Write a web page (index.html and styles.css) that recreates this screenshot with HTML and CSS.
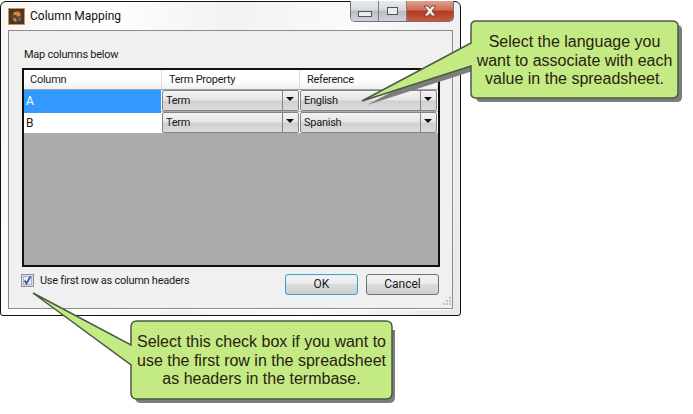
FILE: index.html
```html
<!DOCTYPE html>
<html lang="en">
<head>
    <meta charset="UTF-8" />
    <meta name="viewport" content="width=device-width, initial-scale=1" />
    <title>Column Mapping</title>
    <link rel="stylesheet" href="styles.css">
</head>
<body>
<div class="page">
    <div class="window">
        <div class="titlebar">
            <svg class="app-icon" width="17" height="17" viewBox="0 0 17 17">
                <rect x="0.5" y="0.5" width="16" height="16" fill="#3a3a38" stroke="#f08a24"/>
                <circle cx="8.5" cy="8.5" r="5.5" fill="#5b4a3a"/>
                <path d="M6 4 L11 3.5 L13 7 L10 9 L8 7 L5.5 7 Z M5 10 L8 10.5 L8.5 14 L6 13 Z M11 11 L13 10 L12 13 Z" fill="#e8812a"/>
            </svg>
            <span class="title-text">Column Mapping</span>
            <div class="controls">
                <div class="ctl ctl-min"><span class="glyph-min"></span></div>
                <div class="ctl ctl-max"><span class="glyph-max"></span></div>
                <div class="ctl ctl-close">
                    <svg width="16" height="12" viewBox="0 0 16 12">
                        <path d="M2 1 H6 L8 3.5 L10 1 H14 L10 6 L14 11 H10 L8 8.5 L6 11 H2 L6 6 Z" fill="#f4efe8" stroke="#6e4a40" stroke-width="1"/>
                    </svg>
                </div>
            </div>
        </div>

        <div class="client">
            <div class="map-label">Map columns below</div>

            <div class="grid">
                <div class="grid-row grid-head">
                    <div class="head-cell">Column</div>
                    <div class="head-cell">Term Property</div>
                    <div class="head-cell">Reference</div>
                </div>
                <div class="grid-row grid-data">
                    <div class="name-cell selected">A</div>
                    <div class="combo"><span class="combo-text">Term</span><span class="combo-btn"></span></div>
                    <div class="combo"><span class="combo-text">English</span><span class="combo-btn"></span></div>
                </div>
                <div class="grid-row grid-data">
                    <div class="name-cell">B</div>
                    <div class="combo"><span class="combo-text">Term</span><span class="combo-btn"></span></div>
                    <div class="combo"><span class="combo-text">Spanish</span><span class="combo-btn"></span></div>
                </div>
            </div>

            <div class="footer">
                <div class="check">
                    <svg width="13" height="13" viewBox="0 0 13 13">
                        <rect x="0.5" y="0.5" width="12" height="12" fill="#d5dcea" stroke="#8e8f8f"/>
                        <rect x="2.5" y="2.5" width="8" height="8" fill="#e4e9f3" stroke="#aab4c8"/>
                        <path d="M3.5 6.5 L5.5 9.5 L9.5 2.5" fill="none" stroke="#3d4f9c" stroke-width="1.7"/>
                    </svg>
                    <span>Use first row as column headers</span>
                </div>
                <div class="buttons">
                    <div class="btn btn-default">OK</div>
                    <div class="btn">Cancel</div>
                </div>
            </div>

            <svg class="grip" width="10" height="10" viewBox="0 0 10 10">
                <path d="M8 0h2v2H8z M5 3h2v2H5z M8 3h2v2H8z M2 6h2v2H2z M5 6h2v2H5z M8 6h2v2H8z" fill="#c4c4c4"/>
            </svg>
        </div>
    </div>

    <svg class="callouts" width="693" height="414" viewBox="0 0 693 414">
        <path d="M367 105 L476 47 V30 Q476 25 481 25 H677 Q682 25 682 30 V97 Q682 102 677 102 H481 Q476 102 476 97 V70 Z" fill="#7d7d7d"/>
        <path d="M362 101 L471 43 V26 Q471 21 476 21 H672 Q678 21 678 26 V93 Q678 98 672 98 H476 Q471 98 471 93 V66 Z" fill="#c3ea83" stroke="#4b5a45" stroke-width="1.5"/>
        <path d="M135 330 H395 V397 Q395 403 389 403 H141 Q135 403 135 397 Z" fill="#7d7d7d"/>
        <path d="M33 293 L131 345 V327 Q131 321 137 321 H386 Q392 321 392 327 V393 Q392 399 386 399 H137 Q131 399 131 393 V365 Z" fill="#c3ea83" stroke="#4b5a45" stroke-width="1.5"/>
    </svg>
    <div class="note note-lang">Select the language you<br>want to associate with each<br>value in the spreadsheet.</div>
    <div class="note note-check">Select this check box if you want to<br>use the first row in the spreadsheet<br>as headers in the termbase.</div>
</div>
</body>
</html>
```

FILE: styles.css
```css
html, body {
    margin: 0;
    padding: 0;
    background: #fff;
}
.page {
    position: relative;
    width: 693px;
    height: 414px;
    overflow: hidden;
    padding-top: 1px;
    box-sizing: border-box;
    font-family: Roboto, sans-serif;
    font-size: 11px;
    letter-spacing: -0.26px;
    color: #1a1a1a;
}
.window {
    width: 461px;
    height: 315px;
    box-sizing: border-box;
    border: 1px solid #111;
    border-radius: 6px 6px 3px 3px;
    background: linear-gradient(100deg, #f7f7f7, #fff 20%, #f2f2f2 45%, #fbfbfb 70%, #e9e9e9);
    padding: 0 7px;
    display: flex;
    flex-direction: column;
}
.titlebar {
    height: 28px;
    flex: none;
    display: flex;
    align-items: flex-start;
}
.app-icon {
    margin-top: 6px;
    flex: none;
}
.title-text {
    margin: 7px 0 0 5px;
    font-size: 12px;
    letter-spacing: 0;
    color: #111;
}
.controls {
    margin-left: auto;
    margin-right: -1px;
    margin-top: -1px;
    display: flex;
    height: 20px;
    border: 1px solid #6d7278;
    border-top: none;
    border-radius: 0 0 5px 5px;
    overflow: hidden;
}
.ctl {
    display: flex;
    align-items: center;
    justify-content: center;
    background: linear-gradient(#e8eaec, #d8dade 45%, #b9bcc2 50%, #cfd2d6);
}
.ctl-min {
    width: 27px;
    border-right: 1px solid #7b7f85;
}
.ctl-max {
    width: 27px;
    border-right: 1px solid #7b7f85;
}
.ctl-close {
    width: 46px;
    background: linear-gradient(#e0a292, #cf6b52 45%, #b23a22 52%, #c9593f);
}
.glyph-min {
    width: 12px;
    height: 4px;
    margin-top: 5px;
    background: #e9ebee;
    border: 1px solid #50565e;
}
.glyph-max {
    width: 9px;
    height: 6px;
    background: #e9ebee;
    border: 1.5px solid #50565e;
}
.client {
    position: relative;
    flex: 1;
    box-sizing: border-box;
    margin-bottom: 6px;
    background: #f0f0f0;
    border: 1px solid #8c8c8c;
    box-shadow: 0 1px 0 #fff;
    padding: 16px 12px 0 12px;
    display: flex;
    flex-direction: column;
}
.map-label {
    height: 16px;
    line-height: 16px;
    margin: 0 0 5px 3px;
}
.grid {
    height: 199px;
    flex: none;
    box-sizing: border-box;
    margin-left: 1px;
    border: 2px solid #111;
    background: #ababab;
}
.grid-row {
    display: grid;
    grid-template-columns: 138px 138px 138px;
}
.grid-head {
    height: 19px;
    border-bottom: 1px solid #a0a0a0;
    background: linear-gradient(#fff, #fff 50%, #eef0f2);
}
.head-cell {
    padding-left: 7px;
    line-height: 19px;
    border-right: 1px solid #dcdcdc;
}
.head-cell:first-child {
    padding-left: 6px;
}
.grid-data {
    height: 22px;
    box-sizing: border-box;
    background: #fff;
    border-bottom: 1px solid #ababab;
}
.name-cell {
    padding-left: 2px;
    line-height: 23px;
    font-size: 12px;
    letter-spacing: 0;
    margin-right: 1px;
}
.selected {
    background: #3399ff;
    color: #fff;
}
.combo {
    display: flex;
    margin: 0 1px 0 0;
    height: 21px;
    box-sizing: border-box;
    border: 1.5px solid #838383;
    border-radius: 2px;
    background: linear-gradient(#f3f3f3, #e6e6e6 45%, #d0d0d0 55%, #dcdcdc);
}
.combo-text {
    flex: 1;
    padding-left: 3px;
    line-height: 20px;
}
.combo-btn {
    position: relative;
    width: 15px;
    border-left: 1.5px solid #838383;
}
/* little black arrow */
.combo-btn::after {
    content: "";
    position: absolute;
    left: 3px;
    top: 6px;
    border-left: 4px solid transparent;
    border-right: 4px solid transparent;
    border-top: 4px solid #111;
}
.footer {
    flex: none;
    margin-top: 7px;
    display: flex;
    justify-content: space-between;
    align-items: flex-start;
}
.check {
    display: flex;
    align-items: center;
    gap: 6px;
    height: 13px;
}
.buttons {
    display: flex;
    gap: 8px;
    margin-right: 1px;
}
.btn {
    width: 73px;
    height: 21px;
    box-sizing: border-box;
    border: 1px solid #707070;
    border-radius: 3px;
    text-align: center;
    line-height: 19px;
    font-size: 12px;
    letter-spacing: 0;
    background: linear-gradient(#f2f2f2, #ebebeb 45%, #dcdcdc 50%, #cfcfcf);
}
.btn-default {
    border: 1.5px solid #3c9fd0;
    box-shadow: inset 0 0 1px #8fd6f5;
}
.grip {
    position: absolute;
    right: 1px;
    bottom: 1px;
}
.callouts {
    position: absolute;
    left: 0;
    top: 0;
}
.note {
    position: absolute;
    font-family: "Liberation Sans", Arial, sans-serif;
    font-size: 16px;
    letter-spacing: 0;
    line-height: 18.5px;
    text-align: center;
    color: #2a2212;
    white-space: nowrap;
}
.note-lang {
    left: 471px;
    top: 33px;
    width: 207px;
}
.note-check {
    left: 131px;
    top: 333px;
    width: 261px;
}
```
